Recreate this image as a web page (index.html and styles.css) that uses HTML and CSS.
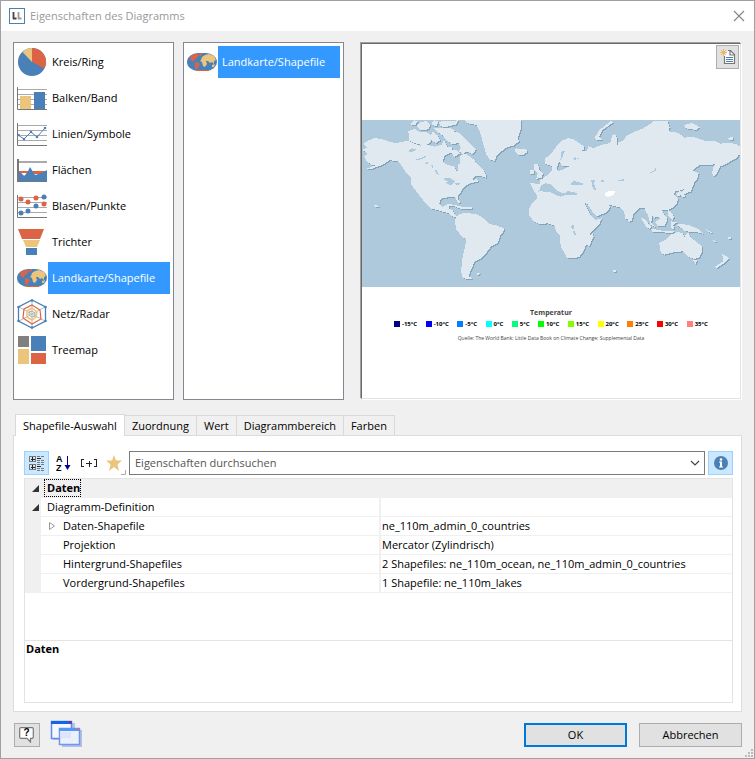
FILE: index.html
```
<!DOCTYPE html>
<html lang="de">
<head>
<meta charset="utf-8">
<title>Eigenschaften des Diagramms</title>
<link rel="stylesheet" href="styles.css">
</head>
<body>
<svg class="defs" aria-hidden="true">
  <symbol id="globe" viewBox="0 0 30 20">
    <rect y="1" width="30" height="18" rx="11" ry="9" fill="#4a80b8"/>
    <path d="M4 4l3-2h4l1 1-2 3-2 1-2 3-2-2-1-2zM12 2l3-1 0 2-2 1zM8 10l4 1 1 2-2 2-1 3-2-2z" fill="#dc6445"/>
    <path d="M14 8l1-3 3-2 4-1 5 2 2 4-2 1 0 3-2-2-2 1-2-2-2 0 1 3-2 3-2-1-1-4-2-1z" fill="#eac57b"/>
    <path d="M25 13l3-1-1 3-2 0z" fill="#eac57b"/>
    <path d="M9 18h13v1H9z" fill="#dc6445"/>
  </symbol>
</svg>
<main class="window">
  <header class="titlebar">
    <svg class="logo" width="16" height="16" viewBox="0 0 16 16"><rect x=".5" y=".5" width="15" height="15" fill="#fff" stroke="#4a80b8"/><path d="M4.500 4v7M4 10.500h3.500" fill="none" stroke="#444" stroke-width="1.800"/><path d="M9.500 4v7M9 10.500h3.500" fill="none" stroke="#999" stroke-width="1.800"/></svg>
    <h1>Eigenschaften des Diagramms</h1>
    <button class="close" aria-label="Schließen"><svg width="12" height="12" viewBox="0 0 12 12"><path d="M1 1l10 10M11 1L1 11" stroke="#888" stroke-width="1.200"/></svg></button>
  </header>

  <div class="content">
    <section class="upper">
      <ul class="list">
        <li><button class="item"><svg viewBox="0 0 30 30"><circle cx="15" cy="15" r="14" fill="#4a80b8"/><path d="M15 15V1a14 14 0 0 1 12.500 20.500z" fill="#dc6445"/><path d="M15 15V1A14 14 0 0 0 5.500 5z" fill="#eac57b"/></svg><span>Kreis/Ring</span></button></li>
        <li><button class="item"><svg viewBox="0 0 30 30"><path d="M1 6.500h29M1 11.500h29M1 16.500h29M1 21.500h29" stroke="#aaa"/><path d="M3 13h11v13H3z" fill="#eac57b"/><path d="M17 9h11v17H17z" fill="#4a80b8"/><path d="M.5 4v22.500H30" fill="none" stroke="#777"/></svg><span>Balken/Band</span></button></li>
        <li><button class="item"><svg viewBox="0 0 30 30"><path d="M1 6.500h29M1 11.500h29M1 16.500h29M1 21.500h29" stroke="#aaa"/><path d="M1 16l6 4 7-7 6 5 8-9" fill="none" stroke="#4a80b8"/><g fill="#4a80b8"><circle cx="1.500" cy="16" r="1.300"/><circle cx="7" cy="20" r="1.300"/><circle cx="14" cy="13" r="1.300"/><circle cx="20" cy="18" r="1.300"/><circle cx="28" cy="9" r="1.300"/></g><path d="M.5 4v22.500H30" fill="none" stroke="#777"/></svg><span>Linien/Symbole</span></button></li>
        <li><button class="item"><svg viewBox="0 0 30 30"><path d="M1 7h29" stroke="#aaa" stroke-width="2"/><path d="M2 16h28v8H2z" fill="#dc6445"/><path d="M4 18h3l2 0 1 2-3 1zM16 19l9 0-3 2-4 1z" fill="#fff"/><path d="M2 16l5 5 3-3 3-6 5 8 7-2 5-3v11H2z" fill="#4a80b8"/><path d="M1 4v22" stroke="#777" stroke-width="2"/><path d="M0 26.500h30" stroke="#777"/></svg><span>Flächen</span></button></li>
        <li><button class="item"><svg viewBox="0 0 30 30"><path d="M1 6.500h29M1 11.500h29M1 16.500h29M1 21.500h29" stroke="#aaa"/><path d="M.5 4v22.500H30" fill="none" stroke="#777"/><g fill="#dc6445"><circle cx="4" cy="8" r="2.500"/><circle cx="11" cy="11" r="2.500"/><circle cx="19" cy="7" r="2.500"/><circle cx="27" cy="13" r="2.500"/></g><g fill="#4a80b8"><circle cx="4" cy="22" r="2.500"/><circle cx="11" cy="20" r="2.500"/><circle cx="19" cy="15" r="2.500"/><circle cx="27" cy="6" r="2.500"/></g></svg><span>Blasen/Punkte</span></button></li>
        <li><button class="item"><svg viewBox="0 0 30 30"><path d="M1 2h26l-4 10H5z" fill="#dc6445"/><path d="M6 13h17l-3 7H9z" fill="#eac57b"/><path d="M9 21h11v7H9z" fill="#4a80b8"/></svg><span>Trichter</span></button></li>
        <li><button class="item selected"><svg><use href="#globe"/></svg><span>Landkarte/Shapefile</span></button></li>
        <li><button class="item"><svg viewBox="0 0 30 30" fill="none"><path d="M15 1v28M2 8l26 14M28 8L2 22" stroke="#bbb"/><path d="M15 1l13.500 7v14L15 29 1.500 22V8z" stroke="#4a80b8" stroke-width="1.300"/><path d="M15 6l8 5 1 9-9 5-9-6 1-9z" stroke="#dc6445" stroke-width="1.200"/><path d="M15 9l5 4-1 5-4 3-5-3V12z" stroke="#eac57b" stroke-width="1.500"/><path d="M15 12l3 2v3l-3 1-3-2v-3z" stroke="#aaa"/><g fill="#4a80b8"><circle cx="15" cy="1.500" r="1.300"/><circle cx="28.500" cy="8" r="1.300"/><circle cx="28.500" cy="22" r="1.300"/><circle cx="15" cy="28.500" r="1.300"/><circle cx="1.500" cy="22" r="1.300"/><circle cx="1.500" cy="8" r="1.300"/></g></svg><span>Netz/Radar</span></button></li>
        <li><button class="item"><svg viewBox="0 0 30 30" shape-rendering="crispEdges"><path d="M1 1h11v11H1z" fill="#808080"/><path d="M14 1h15v15H14z" fill="#4a80b8"/><path d="M1 14h11v15H1z" fill="#eac57b"/><path d="M14 18h15v11H14z" fill="#dc6445"/></svg><span>Treemap</span></button></li>
      </ul>

      <ul class="list">
        <li><button class="item selected"><svg><use href="#globe"/></svg><span>Landkarte/Shapefile</span></button></li>
      </ul>

      <div class="preview">
        <button class="report" aria-label="Neuer Bericht"><svg width="16" height="16" viewBox="0 0 16 16"><path d="M4.500 7v7.500h10v-9l-4-4H8M10 2v4h4" fill="#fff" stroke="#777" stroke-width="1.200"/><path d="M6 8.500h7M6 10.500h7M6 12.500h7" stroke="#4a80b8"/><path d="M3.500 0v7M0 3.500h7M1 1l5 5M6 1L1 6" stroke="#eab866"/></svg></button>
        <svg class="map" viewBox="6 15 1137 501" shape-rendering="crispEdges" role="img" aria-label="Weltkarte">
          <path d="M6 15h1137v501H6z" fill="#aec9dc"/>
          <defs><g id="land">
            <path d="M8 105l12-7-10-10 12-10 18-8 20 1 20 6 25 8 25-5 18-2 12 7 20 7 25-2 20 5 20-5 8-14 10 20 15 0-3 17-22 10-3 17 12 10 22 5 6 15 6-3-3-17 8-5 0-22 15-8 17 12 10 8 12 15 16 13 7 17 3 10-13-5-20-2-10 12 15-2 2 8-22 4-15 8-10 10-5 10-10 10 2 10 8 10-8 2-10-18-17 0-25 5-5 15 10 10 14-8 10 0-6 13 14 5 2 10 10 7 14-3 2 4-10 5-16-3-16-11-22-7-30-8-15-14-15-18-15-20-15-20 0-20-15-15-13-20-12-15-25-3-20 13-20 8-20 7-7-3 22-9-10-3-15-10-7-15 12-7z"/>
            <path d="M152 28l10-12 12 2-8 14zM170 35l10-12 20-6 12 12-6 14-22 3zM145 48l20-6 15 10 18-2 12 8 5 22-18 12-28-6-20-8zM214 28l8-12 14 2-6 16zM238 20l58-4-6 12-30 8-20-2zM222 40l50 0 15 8-20 6-10 10-14-6-12-8zM210 62l10-12 14 12 8 14-14 8-12-6zM252 54l22-6 26 6 18 18 16 16 14 16-8 14-20-8-10 8-14-10 8-10-8-14-18 4-20-14-8-12zM270 108l18-4 12 12-16 10z"/>
            <path d="M285 318l7-13 8-8 20-2 30 3 25 14 15 16 20 4 22 8 1 8-11 14-7 23-20 10-15 20-15 17-20 8-7 18-6 12-4 15 10 7-13 3-17-7-4-18 4-40 7-30 5-25-15-10-15-20z"/>
            <path d="M315 15h170l-2 30-8 25 3 10-16 12-22 6-15 12-15 15-5 13-13-3-12-15-7-25-5-20-8-25-10-20-25-5zM465 105l4-5 9 3 22-1 3 10-13 8-15 0-7-7zM522 148l13-2 5 18 10 11-2 13-18 4 5-17-10-10zM511 165h12l-1 12-11 2zM265 268l20 2 20 6 32 2 0 5-32 0-20-8-20-2zM38 270l10 0 10 6-8 2zM348 478l8-4 6 4-8 3z"/>
            <path d="M512 205l28 2 3-12 15-10 14-13 18-20 5 18 25-10 15-10-10 4-18-2-8-14-5 15-6 14-10 0-2-14-18-5-1-18 18-13 15-22 15-17 20-8 17 2 13 10 20 13-3 10-12 5 22-3 5-13 15 5 20-7 15-5 15-2 7-23 8-6 7 16 0 20 3-10 15-5 10-15 20-10 30-12 20-13 14-10 38 0 8 20-4 12 30 5 18 14 28-2 34 12 31 0 15 8 30-2 20 5 15 10 18 12v15l-28-6-5 10-20 10-15 8-15 7-10 20-10 10-5-10 5-20 5-10-10 5-35 0-15 10-7 7 17 8-5 20-15 15-20 10-15 7 15 18-10 2-10-20-10 3-5 10 12 10-2 17-10 10-15 8-20 2 10 18-10 10-15-10-8 5-7-7-3 22 15 14-17-8-8-33-5-5-5-13-15 0-20 18-2 20-8 3-12-13-6-20-12-10-20-5-15-3 7 8-12 15-30 12-10-12-17-25-10-5 20 40 15 12 18-4-8 20-15 12-13 15 0 20-12 15-5 15-15 20-35 3-10-18-10-15-3-35-12-15-3-15-22-7-25 2-15-7-15-18-2-15 7-17 20-23-3-6z"/>
            <path d="M705 70l15-25 35-27 7 4-32 23-10 20 8 10-18 0zM975 30l25-6 22 13-10 8-32-5zM1107 70l13-5 3 10-13 0zM955 245l-5-10 20-5 15-15 13-35 7 25-10 25-20 8zM992 165h6l4 25-7 5zM845 310l10 2 20 23-2 10-13-10zM875 342l35 6 35 2-3 5-62-4zM888 322l17-12 15-7 5 12-10 20-20 0zM935 320l20 3-13 7 3 15-9-5zM925 280l7 10 13 15-5 10-12-10zM950 330l20-2 25 5 25 12 12 12-22-5-30-2-15-10zM900 385l20-10 15-15 20-8 17 3 3 13 12-16 8 16 15 12 18 15 2 15-10 20-15 3-20-8-15-15-25 3-30 7-10-5zM1002 437h13l-5 12zM1090 418l20 12-10 12-25 18-8-3 25-17zM682 370l18-15 3 10-13 30-10-5zM798 304l6 8-6 1zM1035 340l24 14-4 2zM1106 368h9v5h-9zM1062 376l10 6-6 1zM760 466h9v5h-9z"/>
          </g></defs>
          <use class="shore" href="#land" x="3" y="3"/>
          <use class="land" href="#land"/>
          <g fill="#aec9dc">
            <path d="M515 233l23-3 6-18 15-7 16 4 15 16 15 9 15 0 2-6 30 6 3 8-33-2-20 6-29-13-30-4zM635 207l10-10 10 5 15 2 2 8-35 0zM695 195h13l-5 10 8 22-10-4zM725 195h10v8h-10zM606 110l10-2-8 20-8 12 6 16-6 0zM640 132l8-6 2 10zM650 128l8 0-2 8zM875 175l14-8 2-10-6 10-16 7zM775 196l20-3v5l-18 1zM634 335l10-6-2 16-6-4zM640 350h6l6 12h-6z"/>
            <path d="M146 105l12-5 12 4-10 6-12 2zM168 132l14-2 14-8 4 4-14 6-14 4zM192 144l14-2-4 6zM213 150h8l-2 10zM224 166l6-2 8 16-8-2zM252 188l20 2 14 10-12 12-16-8 8-4-14-6zM286 205h16l-10 8z"/>
          </g>
          <path d="M738 235l12-7 18 2-5 10-18 7-7-4z" fill="#fff"/>
        </svg>
        <div class="legend">
          <h2>Temperatur</h2>
          <ul class="scale">
            <li class="m15">-15°C</li><li class="m10">-10°C</li><li class="m5">-5°C</li><li class="p0">0°C</li><li class="p5">5°C</li><li class="p10">10°C</li><li class="p15">15°C</li><li class="p20">20°C</li><li class="p25">25°C</li><li class="p30">30°C</li><li class="p35">35°C</li>
          </ul>
          <p>Quelle: The World Bank: Little Data Book on Climate Change: Supplemental Data</p>
        </div>
      </div>
    </section>

    <nav class="tabs">
      <button class="tab active">Shapefile-Auswahl</button><button class="tab">Zuordnung</button><button class="tab">Wert</button><button class="tab">Diagrammbereich</button><button class="tab">Farben</button>
    </nav>

    <section class="panel">
      <div class="toolbar">
        <button class="tool on" aria-label="Kategorien"><svg width="15" height="16" viewBox="0 0 15 16" fill="none" shape-rendering="crispEdges"><path d="M.5 1.500h6v5h-6zM.5 9.500h6v5h-6z" stroke="#777"/><path d="M2 4.500h4M3.500 2v4M2 12.500h4M3.500 10v4M8 3.500h4M8 11.500h4" stroke="#222"/><path d="M8 1.500h7M8 5.500h7M8 7.500h7M8 9.500h7M8 13.500h7M8 15.500h7" stroke="#777" stroke-dasharray="3 1"/></svg></button>
        <button class="tool" aria-label="Alphabetisch"><svg width="15" height="18" viewBox="0 0 15 18"><text class="letters" x="0" y="8">A</text><text class="letters" x="0" y="17">Z</text><path d="M11.500 2v11" stroke="#00008b"/><path d="M8.500 11h6l-3 5z" fill="#00008b"/></svg></button>
        <button class="tool" aria-label="Aufklappen"><svg width="16" height="10" viewBox="0 0 16 10" fill="none" stroke="#222" shape-rendering="crispEdges"><path d="M3 1.500H.5v7H3M13 1.500h2.500v7H13M5 5.500h6M8.500 3v6"/></svg></button>
        <button class="tool star" aria-label="Favoriten"><svg width="24" height="24" viewBox="0 0 24 24"><path d="M12 4l2 5.500h6l-4.500 4L17 20l-5-4-5 4 1.500-6.500L4 9.500h6z" fill="#eac57b"/><path d="M23.500 19v4.500H19" fill="none" stroke="#aaa"/></svg></button>
        <div class="search">
          <input type="text" aria-label="Eigenschaften durchsuchen" placeholder="Eigenschaften durchsuchen">
          <button aria-label="Verlauf"><svg width="10" height="6" viewBox="0 0 10 6"><path d="M1 1l4 4 4-4" fill="none" stroke="#444" stroke-width="1.200"/></svg></button>
        </div>
        <button class="tool on" aria-label="Info"><svg width="14" height="14" viewBox="0 0 14 14"><circle cx="7" cy="7" r="7" fill="#4a80b8"/><circle cx="7" cy="3.500" r="1.300" fill="#fff"/><path d="M5 5.500h3v5h1v1H5v-1h1v-4H5z" fill="#fff"/></svg></button>
      </div>
      <div class="properties">
        <table>
          <colgroup><col class="gutter"><col class="name"><col></colgroup>
          <tbody>
            <tr class="group"><td><svg width="7" height="7"><path d="M7 0v7H0z" fill="#333"/></svg></td><th colspan="2"><span>Daten</span></th></tr>
            <tr><td><svg width="7" height="7"><path d="M7 0v7H0z" fill="#333"/></svg></td><th>Diagramm-Definition</th><td></td></tr>
            <tr class="child"><td></td><th><svg width="6" height="8" viewBox="0 0 6 8"><path d="M.5 .5v7l5-3.500z" fill="#fff" stroke="#999"/></svg>Daten-Shapefile</th><td>ne_110m_admin_0_countries</td></tr>
            <tr class="child"><td></td><th>Projektion</th><td>Mercator (Zylindrisch)</td></tr>
            <tr class="child"><td></td><th>Hintergrund-Shapefiles</th><td>2 Shapefiles: ne_110m_ocean, ne_110m_admin_0_countries</td></tr>
            <tr class="child"><td></td><th>Vordergrund-Shapefiles</th><td>1 Shapefile: ne_110m_lakes</td></tr>
          </tbody>
        </table>
      </div>
      <div class="description">Daten</div>
    </section>

    <footer class="actions">
      <button class="help" aria-label="Hilfe"><svg width="16" height="16" viewBox="0 0 16 16"><path d="M2 .7h11q1.300 0 1.300 1.300v8q0 1.300-1.300 1.300h-1.500V15L8 11.300H2Q.7 11.300.7 10V2Q.7.7 2 .7z" fill="#fff" stroke="#777" stroke-width="1.200"/><text class="mark" x="7.500" y="9">?</text></svg></button>
      <svg class="windows" width="34" height="30" viewBox="0 0 34 30"><path d="M3 3h22v17H3z" fill="#b8c3e8"/><path d="M1.500 1.500h20v17h-20z" fill="#f4f7ff" stroke="#5f8ae8" stroke-width="1.500"/><path d="M1 1h21v3H1z" fill="#1464e8"/><path d="M19 1h2v2h-2z" fill="#e01030"/><path d="M12 10h20v17H12z" fill="#b5c0e4"/><path d="M9.500 8.500h20v16h-20z" fill="#f0f4ff" fill-opacity=".92" stroke="#7295f0" stroke-width="1.500"/><path d="M9 8h21v3H9z" fill="#5796f5"/><path d="M10 12h11v6H10z" fill="#dce5fb"/><path d="M27 8h2v2h-2z" fill="#f06080"/></svg>
      <button class="push primary">OK</button>
      <button class="push">Abbrechen</button>
    </footer>
  </div>
  <svg class="grip" width="8" height="8" fill="#bbb"><path d="M6 0h2v2H6zM3 3h2v2H3zM6 3h2v2H6zM0 6h2v2H0zM3 6h2v2H3zM6 6h2v2H6z"/></svg>
</main>
</body>
</html>
```
FILE: styles.css
```
* { box-sizing: border-box; }
body {
  margin: 0;
  font: 11px/16px "Open Sans", "Noto Sans", sans-serif;
  color: #000;
}
button, input { font: inherit; color: inherit; }
button { padding: 0; border: 0; background: none; }
ul { margin: 0; padding: 0; list-style: none; }
h1, h2, p { margin: 0; }
.defs { position: absolute; width: 0; height: 0; }

.window {
  position: relative;
  display: flex;
  flex-direction: column;
  min-height: 100vh;
  border: 1px solid #a0a0a0;
  background: #f0f0f0;
}
.titlebar {
  display: flex;
  align-items: center;
  gap: 5px;
  height: 30px;
  padding: 0 9px 0 8px;
  background: #fff;
}
.titlebar h1 { flex: 1; font-size: 11px; font-weight: 400; color: #999; }
.close { display: flex; }

.content {
  flex: 1;
  display: flex;
  flex-direction: column;
  padding: 11px 12px;
}
.upper {
  flex: 1;
  display: grid;
  grid-template-columns: 161fr 161fr 389fr;
  column-gap: 9px;
}
.list { border: 1px solid #828790; background: #fff; padding: 1px 3px; }
.item { display: flex; align-items: center; width: 100%; height: 36px; text-align: left; }
.item svg { flex: none; width: 30px; height: 30px; margin-right: 1px; }
.item span { flex: 1; padding: 8px 4px; white-space: nowrap; }
.item.selected span { background: #3399ff; color: #fff; }

.preview {
  position: relative;
  margin: 1px 1px 1px 8px;
  padding-top: 76px;
  border: 1px solid;
  border-color: #696969 #e3e3e3 #e3e3e3 #696969;
  box-shadow: -1px -1px 0 #a0a0a0, 1px 1px 0 #fff;
  background: #fff;
}
.report {
  position: absolute;
  top: 1px;
  right: 1px;
  display: flex;
  align-items: center;
  justify-content: center;
  width: 23px;
  height: 24px;
  border: 1px solid #adadad;
  background: #e1e1e1;
}
.map { display: block; width: 100%; }
.shore { fill: #82a3b8; }
.land { fill: #e0e9ef; }
.legend { padding-top: 20px; text-align: center; color: #444; }
.legend h2 { font-size: 7px; line-height: 12px; }
.scale {
  display: flex;
  justify-content: space-between;
  padding: 0 32px;
  font-size: 6px;
  line-height: 10px;
  font-weight: 700;
  color: #000;
}
.scale li { display: flex; align-items: center; gap: 2px; }
.scale li::before { content: ""; width: 6px; height: 6px; background: currentColor; }
.scale .m15::before { background: #000080; }
.scale .m10::before { background: #0000ff; }
.scale .m5::before { background: #0080ff; }
.scale .p0::before { background: #00ffff; }
.scale .p5::before { background: #00ff80; }
.scale .p10::before { background: #00ff00; }
.scale .p15::before { background: #80ff00; }
.scale .p20::before { background: #ffff00; }
.scale .p25::before { background: #ff8000; }
.scale .p30::before { background: #ff0000; }
.scale .p35::before { background: #ff8080; }
.legend p { padding-top: 4px; font-size: 5px; line-height: 10px; }

.tabs { display: flex; align-items: flex-end; margin-top: 14px; padding-left: 2px; }
.tab {
  height: 20px;
  padding: 0 7px;
  border: 1px solid #d9d9d9;
  border-width: 1px 1px 0 0;
  white-space: nowrap;
}
.tab.active {
  position: relative;
  height: 22px;
  margin-bottom: -1px;
  border-left-width: 1px;
  background: #fff;
}
.panel { padding: 15px 8px 8px 10px; border: 1px solid #dcdcdc; background: #fff; }
.toolbar { display: flex; align-items: center; height: 24px; margin-bottom: 3px; }
.tool { flex: none; display: flex; align-items: center; justify-content: center; width: 25px; height: 24px; }
.tool.on { border: 1px solid #99d1ff; background: #cce8ff; }
.tool.on:first-child { margin-right: 2px; }
.letters { font: 700 9px "Liberation Sans", sans-serif; }
.search { flex: 1; display: flex; align-items: center; height: 24px; margin: 0 3px; border: 1px solid #7a7a7a; background: #fff; }
.search input { flex: 1; min-width: 0; padding: 0 5px; border: 0; background: none; outline: 0; }
.search input::placeholder { color: #555; opacity: 1; }
.search button { display: flex; padding: 0 4px; }

.properties { min-height: 163px; border: 1px solid #e3e3e3; }
table { width: 100%; border-collapse: separate; border-spacing: 0; table-layout: fixed; }
.gutter { width: 16px; }
.name { width: 338px; }
td, th {
  height: 19px;
  padding: 0 1px;
  border-bottom: 1px solid #f0f0f0;
  line-height: 16px;
  font-weight: 400;
  text-align: left;
  white-space: nowrap;
}
tr td:first-child { background: #f0f0f0; padding: 0 0 0 7px; line-height: 8px; }
th { padding-left: 6px; }
th + td { border-left: 2px solid #f0f0f0; }
.group th { padding-left: 4px; font-weight: 700; background: #f0f0f0; }
.group span { display: block; width: fit-content; padding: 0 0 0 2px; outline: 1px dotted #000; }
.child th { padding-left: 22px; }
.child th svg { margin-left: -14px; margin-right: 8px; }
.description { height: 62px; padding: 0 1px; border: 1px solid #e3e3e3; border-top: 0; font-weight: 700; }

.actions { display: flex; align-items: center; gap: 12px; height: 24px; margin-top: 11px; }
.help { display: flex; align-items: center; justify-content: center; width: 26px; height: 24px; margin-left: 1px; border: 1px solid #adadad; background: #e1e1e1; }
.mark { font: 700 10px "Liberation Sans", sans-serif; text-anchor: middle; }
.windows { margin-left: -2px; margin-right: auto; }
.push { width: 103px; height: 24px; border: 1px solid #adadad; background: #e1e1e1; }
.push.primary { border: 2px solid #0078d7; }
.grip { position: absolute; right: 1px; bottom: 1px; }
```
